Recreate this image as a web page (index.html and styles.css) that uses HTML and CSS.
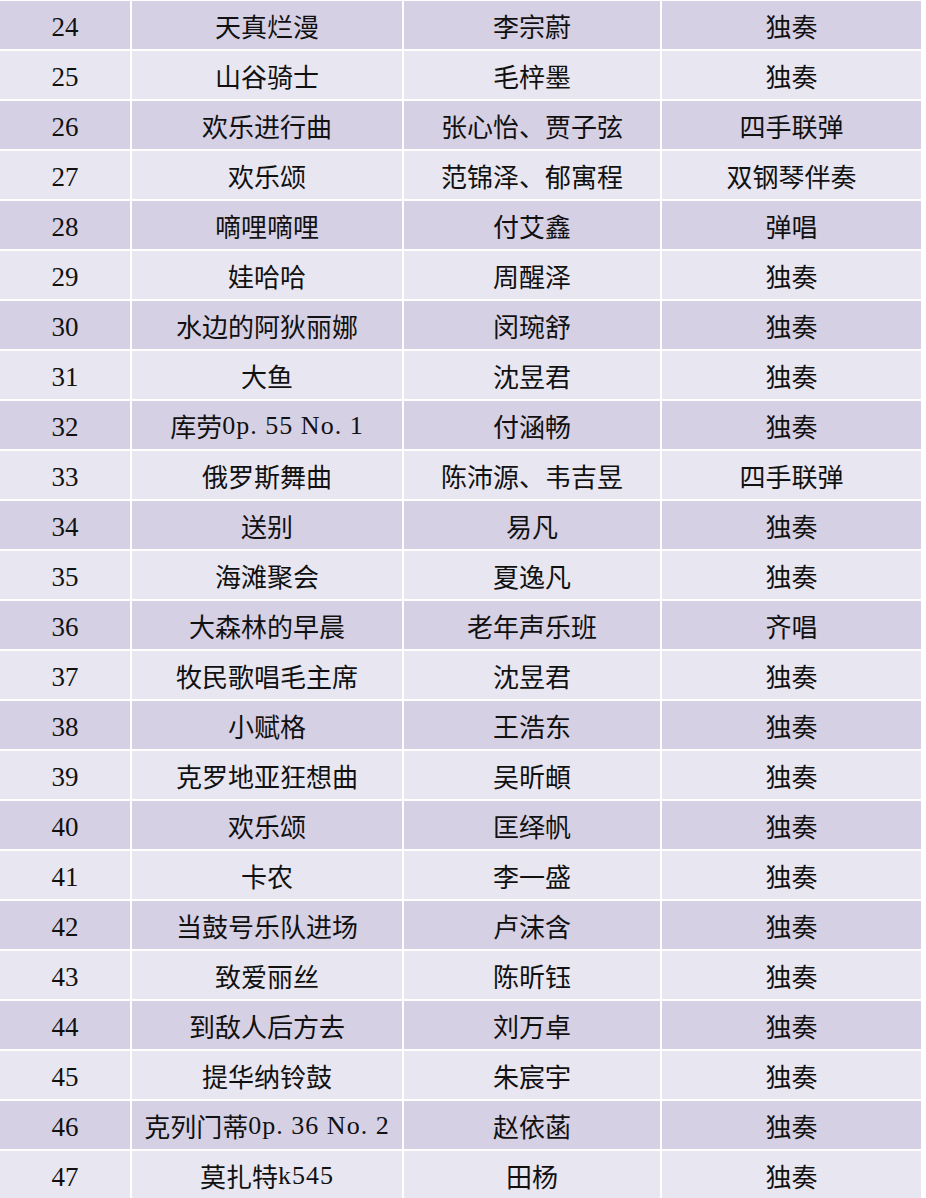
FILE: index.html
```html
<!DOCTYPE html>
<html lang="zh-CN">
<head>
<meta charset="utf-8">
<title>节目单</title>
<link rel="stylesheet" href="styles.css">
</head>
<body>
<div class="table">
  <div class="row even"><div class="cell num">24</div><div class="cell">天真烂漫</div><div class="cell">李宗蔚</div><div class="cell">独奏</div></div>
  <div class="row odd"><div class="cell num">25</div><div class="cell">山谷骑士</div><div class="cell">毛梓墨</div><div class="cell">独奏</div></div>
  <div class="row even"><div class="cell num">26</div><div class="cell">欢乐进行曲</div><div class="cell">张心怡、贾子弦</div><div class="cell">四手联弹</div></div>
  <div class="row odd"><div class="cell num">27</div><div class="cell">欢乐颂</div><div class="cell">范锦泽、郁寓程</div><div class="cell">双钢琴伴奏</div></div>
  <div class="row even"><div class="cell num">28</div><div class="cell">嘀哩嘀哩</div><div class="cell">付艾鑫</div><div class="cell">弹唱</div></div>
  <div class="row odd"><div class="cell num">29</div><div class="cell">娃哈哈</div><div class="cell">周醒泽</div><div class="cell">独奏</div></div>
  <div class="row even"><div class="cell num">30</div><div class="cell">水边的阿狄丽娜</div><div class="cell">闵琬舒</div><div class="cell">独奏</div></div>
  <div class="row odd"><div class="cell num">31</div><div class="cell">大鱼</div><div class="cell">沈昱君</div><div class="cell">独奏</div></div>
  <div class="row even"><div class="cell num">32</div><div class="cell">库劳<span class="lat">0p. 55 No. 1</span></div><div class="cell">付涵畅</div><div class="cell">独奏</div></div>
  <div class="row odd"><div class="cell num">33</div><div class="cell">俄罗斯舞曲</div><div class="cell">陈沛源、韦吉昱</div><div class="cell">四手联弹</div></div>
  <div class="row even"><div class="cell num">34</div><div class="cell">送别</div><div class="cell">易凡</div><div class="cell">独奏</div></div>
  <div class="row odd"><div class="cell num">35</div><div class="cell">海滩聚会</div><div class="cell">夏逸凡</div><div class="cell">独奏</div></div>
  <div class="row even"><div class="cell num">36</div><div class="cell">大森林的早晨</div><div class="cell">老年声乐班</div><div class="cell">齐唱</div></div>
  <div class="row odd"><div class="cell num">37</div><div class="cell">牧民歌唱毛主席</div><div class="cell">沈昱君</div><div class="cell">独奏</div></div>
  <div class="row even"><div class="cell num">38</div><div class="cell">小赋格</div><div class="cell">王浩东</div><div class="cell">独奏</div></div>
  <div class="row odd"><div class="cell num">39</div><div class="cell">克罗地亚狂想曲</div><div class="cell">吴昕頔</div><div class="cell">独奏</div></div>
  <div class="row even"><div class="cell num">40</div><div class="cell">欢乐颂</div><div class="cell">匡绎帆</div><div class="cell">独奏</div></div>
  <div class="row odd"><div class="cell num">41</div><div class="cell">卡农</div><div class="cell">李一盛</div><div class="cell">独奏</div></div>
  <div class="row even"><div class="cell num">42</div><div class="cell">当鼓号乐队进场</div><div class="cell">卢沫含</div><div class="cell">独奏</div></div>
  <div class="row odd"><div class="cell num">43</div><div class="cell">致爱丽丝</div><div class="cell">陈昕钰</div><div class="cell">独奏</div></div>
  <div class="row even"><div class="cell num">44</div><div class="cell">到敌人后方去</div><div class="cell">刘万卓</div><div class="cell">独奏</div></div>
  <div class="row odd"><div class="cell num">45</div><div class="cell">提华纳铃鼓</div><div class="cell">朱宸宇</div><div class="cell">独奏</div></div>
  <div class="row even"><div class="cell num">46</div><div class="cell">克列门蒂<span class="lat">0p. 36 No. 2</span></div><div class="cell">赵依菡</div><div class="cell">独奏</div></div>
  <div class="row odd"><div class="cell num">47</div><div class="cell">莫扎特<span class="lat">k545</span></div><div class="cell">田杨</div><div class="cell">独奏</div></div>
</div>
</body>
</html>
```

FILE: styles.css
```css
html, body {
  margin: 0;
  padding: 0;
  background: #ffffff;
}

body {
  width: 926px;
  height: 1198px;
  overflow: hidden;
  font-family: "Liberation Serif", "Noto Sans CJK SC", serif;
  font-size: 26px;
  color: #111111;
}

.table {
  display: flex;
  flex-direction: column;
  gap: 2px;
  padding-top: 1px;
  width: 921px;
}

.row {
  display: grid;
  grid-template-columns: 130px 270px 256px 259px;
  column-gap: 2px;
  height: 48px;
}

.cell {
  display: flex;
  align-items: center;
  justify-content: center;
  padding-top: 1px;
  box-sizing: border-box;
  white-space: nowrap;
}

.cell.num {
  padding-top: 4px;
  font-size: 27px;
}

.even .cell {
  background: #d6d0e4;
}

.odd .cell {
  background: #e8e6f0;
}

.lat {
  letter-spacing: 1px;
}
```
